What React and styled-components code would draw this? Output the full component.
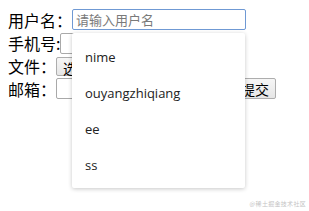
import React from 'react';
import styled, { createGlobalStyle } from 'styled-components';

const GlobalStyle = createGlobalStyle`
  html, body {
    margin: 0;
    background: #fff;
  }
  body {
    padding: 8px;
    width: 309px;
    height: 211px;
    box-sizing: border-box;
    overflow: hidden;
    position: relative;
    font-family: "Noto Sans CJK SC", "Noto Sans", sans-serif;
  }
`;

const Form = styled.form`
  position: relative;
  display: flex;
  flex-direction: column;
`;

const Row = styled.div`
  display: flex;
  align-items: center;
  height: ${({ h }) => h}px;
  font-size: 16px;
  line-height: 1;
  color: #000;
`;

const Label = styled.span`
  white-space: nowrap;
`;

const Input = styled.input`
  box-sizing: border-box;
  width: ${({ w }) => w}px;
  height: 21px;
  margin: 0;
  padding: 1px 3px;
  border: 1px solid ${({ focused }) => focused ? '#6f99d4' : '#a9a9a9'};
  border-radius: 2px;
  outline: none;
  font: 13px "Noto Sans CJK SC", sans-serif;
  color: #000;
  background: #fff;
  &::placeholder {
    color: #7a7a7a;
  }
`;

const Button = styled.button`
  box-sizing: border-box;
  height: ${({ h }) => h}px;
  margin: 0 0 0 ${({ gap }) => gap || 0}px;
  padding: 0 6px;
  border: 1px solid #adadad;
  border-radius: 2px;
  background: linear-gradient(#f6f6f6, #e6e6e6);
  font: 14px "Noto Sans CJK SC", sans-serif;
  color: #000;
  white-space: nowrap;
`;

const Dropdown = styled.ul`
  position: absolute;
  left: 64px;
  top: 25px;
  width: 173px;
  margin: 0;
  padding: 6px 0 5px;
  list-style: none;
  background: #fff;
  border-radius: 2px;
  box-shadow: 0 1px 4px rgba(0, 0, 0, 0.22);
  z-index: 2;
`;

const Option = styled.li`
  height: 36px;
  display: flex;
  align-items: center;
  padding: 0 13px;
  font: 13px "Open Sans", "Noto Sans", sans-serif;
  color: #222;
`;

const Watermark = styled.div`
  position: absolute;
  right: 3px;
  bottom: 3px;
  font-size: 6px;
  color: #c4c4c4;
  font-family: "Noto Sans CJK SC", sans-serif;
  letter-spacing: 0.3px;
`;

const options = ['nime', 'ouyangzhiqiang', 'ee', 'ss'];

export default function App() {
  return (
    <>
      <GlobalStyle />
      <Form onSubmit={e => e.preventDefault()}>
        <Row h={23}>
          <Label>用户名：</Label>
          <Input focused w={174} placeholder="请输入用户名" />
        </Row>
        <Row h={24}>
          <Label>手机号:</Label>
          <Input w={170} />
        </Row>
        <Row h={22}>
          <Label>文件：</Label>
          <Button type="button" h={19}>选择文件</Button>
        </Row>
        <Row h={23}>
          <Label>邮箱：</Label>
          <Input w={170} />
          <Button h={21} gap={8}>提交</Button>
        </Row>
        <Dropdown>
          {options.map(o => <Option key={o}>{o}</Option>)}
        </Dropdown>
      </Form>
      <Watermark>@稀土掘金技术社区</Watermark>
    </>
  );
}
